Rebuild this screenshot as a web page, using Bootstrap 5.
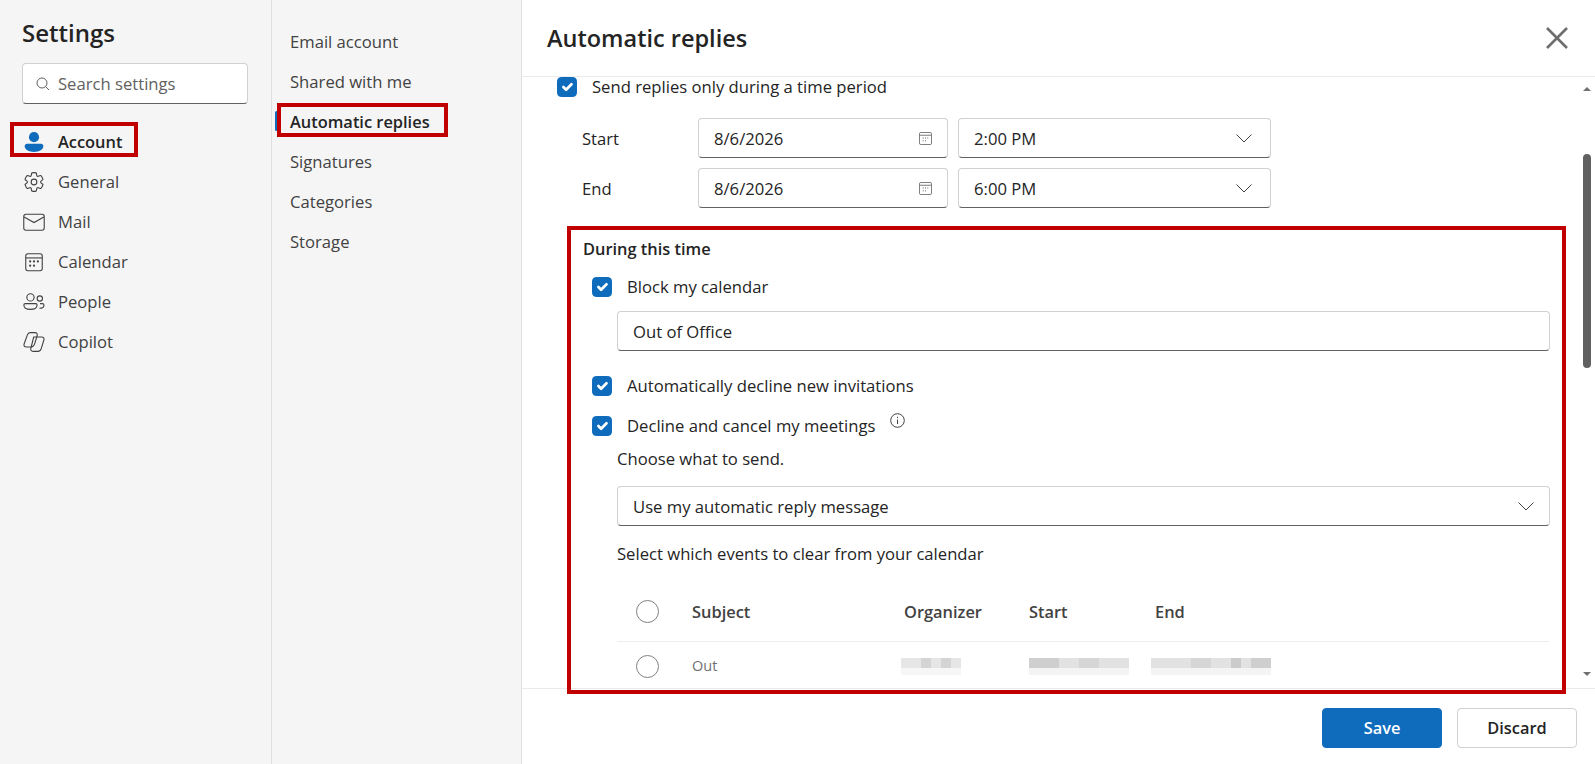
<!DOCTYPE html>
<html lang="en">
<head>
  <meta charset="UTF-8" />
  <meta name="viewport" content="width=device-width, initial-scale=1.0"/>
  <title>Settings - Automatic replies</title>
  <link href="https://cdn.jsdelivr.net/npm/bootstrap@5.3.0/dist/css/bootstrap.min.css" rel="stylesheet">
  <style>
    html, body { height: 764px; overflow: hidden; }
    body { font-family: "Open Sans", "Noto Sans", sans-serif; font-size: 16.65px; color: #242424; background: #fff; }
    .pane-nav { width: 272px; height: 764px; background: #f5f5f5; border-right: 1px solid #e0e0e0; padding: 0 23px 0 22px; flex: none; }
    .pane-sub { width: 250px; height: 764px; background: #f5f5f5; border-right: 1px solid #e0e0e0; padding-top: 22px; flex: none; }
    .pane-main { width: 1073px; height: 764px; flex: none; }
    .settings-title { font-size: 24px; font-weight: 600; line-height: 32px; margin: 17px 0 14px; }
    .search-box { height: 41px; background: #fff; border: 1px solid #d1d1d1; border-bottom-color: #616161; border-radius: 4px; padding-left: 12px; gap: 7px; color: #616161; }
    .search-box span { padding-top: 2px; }
    .nav-rows { margin: 18px 0 0 1px; }
    .nav-row { height: 40px; gap: 13px; color: #424242; position: relative; }
    .nav-row svg { width: 22px; height: 22px; flex: none; }
    .nav-row.is-on { font-weight: 600; font-size: 16.4px; color: #242424; }
    .nav-row.is-on::before { content: ""; position: absolute; left: -13px; top: 10px; width: 3px; height: 20px; background: #0f6cbd; border-radius: 2px; }
    .mark-nav { position: absolute; left: -13px; top: 0; width: 128px; height: 35px; border: 4px solid #c00000; }
    .sub-row { height: 40px; padding-left: 18px; color: #424242; position: relative; }
    .sub-row.is-on { font-weight: 600; font-size: 16.4px; color: #242424; }
    .sub-row.is-on::before { content: ""; position: absolute; left: 3px; top: 9px; width: 3px; height: 20px; background: #0f6cbd; border-radius: 2px; }
    .mark-sub { position: absolute; left: 5px; top: 1px; width: 171px; height: 34px; border: 4px solid #c00000; }
    .main-head { height: 77px; border-bottom: 1px solid #ebebeb; padding: 0 27px 0 25px; }
    .main-title { font-size: 23.5px; font-weight: 600; margin: 0; }
    .main-scroll { height: 611px; }
    .main-content { width: 1056px; flex: none; }
    .main-foot { height: 76px; border-top: 1px solid #ebebeb; padding: 19px 18px 0 0; gap: 15px; }
    .tick { width: 20px; height: 20px; margin: 0; flex: none; border-radius: 3px; }
    .form-check-input:checked.tick { background-color: #0f6cbd; border-color: #0f6cbd; }
    .dot { width: 23px; height: 23px; margin: 0 0 0 19px; border: 1.5px solid #808080; }
    .tick-row { gap: 15px; height: 20px; }
    .time-row { padding-left: 60px; margin-top: 10px; }
    .time-label { width: 116px; flex: none; padding-top: 2px; }
    .fld { height: 40px; background: #fff; border: 1px solid #d1d1d1; border-bottom-color: #616161; border-radius: 4px; padding: 0 15px; }
    .fld span { padding-top: 2px; }
    .fld-date { width: 250px; margin-right: 10px; }
    .fld-time { width: 313px; padding-right: 18px; }
    .mark-area { position: relative; z-index: 1; height: 468px; margin: 18px 12px 0 45px; border: 4px solid #c00000; padding: 9px 12px 0 12px; overflow: hidden; }
    .area-title { font-weight: 600; font-size: 16.4px; line-height: 20px; }
    .sub-indent { margin-left: 9px; }
    .fld-wide { margin-left: 34px; }
    .events { table-layout: fixed; width: 932px; margin: 21px 0 0 34px; color: #424242; }
    .events th, .events td { padding: 0; vertical-align: middle; background: transparent; color: inherit; }
    .events th { height: 56px; font-weight: 600; font-size: 16.4px; border-bottom: 1px solid #ededed; }
    .events td { height: 50px; border: 0; font-size: 14.5px; color: #707070; }
    .blur-bar { display: block; }
    .blur-org { margin-left: -3px; }
    .blur-end { margin-left: -4px; }
    .scroll-track { width: 17px; }
    .arrow-up, .arrow-down { width: 0; height: 0; border-left: 4px solid transparent; border-right: 4px solid transparent; margin: 0 auto; }
    .arrow-up { border-bottom: 4px solid #707070; margin-top: 10px; }
    .arrow-down { border-top: 4px solid #707070; margin-top: 304px; }
    .scroll-thumb { width: 8px; height: 214px; background: #616161; border-radius: 4px; margin: 63px auto 0; }
    .btn-save, .btn-discard { width: 120px; height: 40px; font-size: 16.4px; font-weight: 600; border-radius: 4px; }
    .btn-save { background: #0f6cbd; border-color: #0f6cbd; color: #fff; }
    .btn-discard { background: #fff; border-color: #d1d1d1; color: #242424; }
  </style>
</head>
<body>
<div class="d-flex">
  <div class="pane-nav">
    <div class="settings-title">Settings</div>
    <div class="search-box d-flex align-items-center">
      <svg width="16" height="16" viewBox="0 0 16 16" fill="none" stroke="#616161"><circle cx="7" cy="7" r="5"/><path d="M10.6 10.6 14 14"/></svg>
      <span>Search settings</span>
    </div>
    <div class="nav-rows">
      <div class="nav-row is-on d-flex align-items-center">
        <svg viewBox="0 0 20 20"><circle cx="10" cy="5.6" r="4.6" fill="#0f6cbd"/><path d="M3.6 11.6h12.8c1.2 0 2.1 1 2.1 2.1 0 3.4-3.8 5.3-8.5 5.3s-8.5-1.9-8.5-5.3c0-1.1.9-2.1 2.1-2.1Z" fill="#0f6cbd"/></svg>
        <span>Account</span><span class="mark-nav"></span>
      </div>
      <div class="nav-row d-flex align-items-center">
        <svg viewBox="0 0 20 20" fill="none" stroke="#424242"><path d="M1.91 7.38A8.5 8.5 0 0 1 3.7 4.3a.5.5 0 0 1 .54-.13l1.92.68a1 1 0 0 0 1.32-.76l.36-2a.5.5 0 0 1 .4-.4 8.53 8.53 0 0 1 3.55 0c.2.04.35.2.38.4l.37 2a1 1 0 0 0 1.32.76l1.92-.68a.5.5 0 0 1 .54.13 8.5 8.5 0 0 1 1.78 3.08c.06.2 0 .4-.15.54l-1.56 1.32a1 1 0 0 0 0 1.52l1.56 1.32a.5.5 0 0 1 .15.54 8.5 8.5 0 0 1-1.78 3.08.5.5 0 0 1-.54.13l-1.92-.68a1 1 0 0 0-1.32.76l-.37 2a.5.5 0 0 1-.38.4 8.53 8.53 0 0 1-3.56 0 .5.5 0 0 1-.39-.4l-.36-2a1 1 0 0 0-1.32-.76l-1.92.68a.5.5 0 0 1-.54-.13 8.5 8.5 0 0 1-1.78-3.08.5.5 0 0 1 .15-.54l1.56-1.32a1 1 0 0 0 0-1.52L2.06 7.92a.5.5 0 0 1-.15-.54Z"/><circle cx="10" cy="10" r="2.6"/></svg>
        <span>General</span>
      </div>
      <div class="nav-row d-flex align-items-center">
        <svg viewBox="0 0 20 20" fill="none" stroke="#424242"><rect x=".7" y="3" width="18.6" height="14.5" rx="2"/><path d="m1 5.5 9 5 9-5"/></svg>
        <span>Mail</span>
      </div>
      <div class="nav-row d-flex align-items-center">
        <svg viewBox="0 0 20 20" fill="none" stroke="#424242"><rect x="2.5" y="2.5" width="15" height="15.500" rx="2"/><path d="M2.500 6.300h15"/><g fill="#424242" stroke="none"><circle cx="6.500" cy="9.500" r="1"/><circle cx="10" cy="9.500" r="1"/><circle cx="13.500" cy="9.500" r="1"/><circle cx="6.500" cy="13.300" r="1"/><circle cx="10" cy="13.300" r="1"/></g></svg>
        <span>Calendar</span>
      </div>
      <div class="nav-row d-flex align-items-center">
        <svg viewBox="0 0 20 20" fill="none" stroke="#424242"><circle cx="6.8" cy="5.8" r="3.3"/><path d="M2 11.5h9.6c.7 0 1.2.5 1.2 1.2 0 2.6-2.6 4-6 4s-6-1.4-6-4c0-.7.5-1.2 1.2-1.2Z"/><circle cx="15.3" cy="6.8" r="2.4"/><path d="M15.5 11.5h2c.8 0 1.6.6 1.6 1.4 0 1.9-1.7 2.8-4.2 2.8"/></svg>
        <span>People</span>
      </div>
      <div class="nav-row d-flex align-items-center">
        <svg viewBox="0 0 20 20" fill="none" stroke="#424242"><path d="M6.5 1.500h4.500c1.500 0 2.300 1.200 1.900 2.600L10.500 12c-.5 1.500-1.600 2.500-3 2.500H3c-1.600 0-2.500-1.200-2-2.700L4 3.500C4.400 2.300 5.300 1.500 6.500 1.500Z"/><path d="M9.700 5.500H17c1.600 0 2.500 1.200 2 2.700l-2.500 8c-.5 1.500-1.600 2.300-3 2.300H9c-1.500 0-2.300-1.200-1.900-2.600L9.700 5.500Z"/></svg>
        <span>Copilot</span>
      </div>
    </div>
  </div>

  <div class="pane-sub">
    <div class="sub-row d-flex align-items-center">Email account</div>
    <div class="sub-row d-flex align-items-center">Shared with me</div>
    <div class="sub-row is-on d-flex align-items-center">Automatic replies<span class="mark-sub"></span></div>
    <div class="sub-row d-flex align-items-center">Signatures</div>
    <div class="sub-row d-flex align-items-center">Categories</div>
    <div class="sub-row d-flex align-items-center">Storage</div>
  </div>

  <div class="pane-main">
    <div class="main-head d-flex align-items-center justify-content-between">
      <h1 class="main-title">Automatic replies</h1>
      <svg width="22" height="22" viewBox="0 0 22 22" stroke="#6e6e6e" stroke-width="2.6"><path d="M1 1l20 20M21 1 1 21"/></svg>
    </div>

    <div class="main-scroll d-flex">
      <div class="main-content">
        <div class="tick-row d-flex align-items-center" style="padding-left:35px">
          <input class="form-check-input tick" type="checkbox" checked>
          <span>Send replies only during a time period</span>
        </div>
        <div class="time-row d-flex align-items-center" style="margin-top:21px">
          <span class="time-label">Start</span>
          <div class="fld fld-date d-flex align-items-center justify-content-between"><span>8/6/2026</span>
            <svg width="13" height="13" viewBox="0 0 14 14" fill="none" stroke="#707070"><rect x=".5" y=".5" width="13" height="13" rx="1.500"/><path d="M1 3.500h12"/><path d="M4 6.500h1M6.500 6.500h1M9 6.500h1M4 9.500h1M6.500 9.500h1" stroke="#555"/></svg></div>
          <div class="fld fld-time d-flex align-items-center justify-content-between"><span>2:00 PM</span>
            <svg width="16" height="9" viewBox="0 0 16 9" fill="none" stroke="#424242"><path d="m.5.5 7.500 7.500 7.500-7.500"/></svg></div>
        </div>
        <div class="time-row d-flex align-items-center">
          <span class="time-label">End</span>
          <div class="fld fld-date d-flex align-items-center justify-content-between"><span>8/6/2026</span>
            <svg width="13" height="13" viewBox="0 0 14 14" fill="none" stroke="#707070"><rect x=".5" y=".5" width="13" height="13" rx="1.500"/><path d="M1 3.500h12"/><path d="M4 6.500h1M6.500 6.500h1M9 6.500h1M4 9.500h1M6.500 9.500h1" stroke="#555"/></svg></div>
          <div class="fld fld-time d-flex align-items-center justify-content-between"><span>6:00 PM</span>
            <svg width="16" height="9" viewBox="0 0 16 9" fill="none" stroke="#424242"><path d="m.5.5 7.500 7.500 7.500-7.500"/></svg></div>
        </div>

        <div class="mark-area">
          <div class="area-title">During this time</div>
          <div class="tick-row sub-indent d-flex align-items-center" style="margin-top:18px">
            <input class="form-check-input tick" type="checkbox" checked>
            <span>Block my calendar</span>
          </div>
          <div class="fld fld-wide d-flex align-items-center" style="margin-top:14px"><span>Out of Office</span></div>
          <div class="tick-row sub-indent d-flex align-items-center" style="margin-top:25px">
            <input class="form-check-input tick" type="checkbox" checked>
            <span>Automatically decline new invitations</span>
          </div>
          <div class="tick-row sub-indent d-flex align-items-center" style="margin-top:20px">
            <input class="form-check-input tick" type="checkbox" checked>
            <span>Decline and cancel my meetings</span>
            <svg class="info-mark" width="15" height="15" viewBox="0 0 15 15" fill="none" stroke="#424242" style="margin-bottom:12px"><circle cx="7.500" cy="7.500" r="6.800"/><path d="M7.500 6.500v4.500M7.500 3.800v1.300"/></svg>
          </div>
          <div class="fld-wide" style="margin-top:13px;line-height:20px">Choose what to send.</div>
          <div class="fld fld-wide d-flex align-items-center justify-content-between" style="margin-top:17px"><span>Use my automatic reply message</span>
            <svg width="16" height="9" viewBox="0 0 16 9" fill="none" stroke="#424242"><path d="m.5.5 7.500 7.500 7.500-7.500"/></svg></div>
          <div class="fld-wide" style="margin-top:18px;line-height:20px">Select which events to clear from your calendar</div>
          <table class="table events">
            <colgroup><col style="width:75px"><col style="width:212px"><col style="width:125px"><col style="width:126px"><col></colgroup>
            <thead><tr>
              <th><input class="form-check-input dot rounded-circle" type="radio" name="allEvents"></th>
              <th>Subject</th><th>Organizer</th><th>Start</th><th>End</th>
            </tr></thead>
            <tbody><tr>
              <td><input class="form-check-input dot rounded-circle" type="radio" name="oneEvent"></td>
              <td>Out</td>
              <td><svg class="blur-bar blur-org" width="60" height="17"><rect width="60" height="10" fill="#e6e6e6"/><rect x="20" width="10" height="10" fill="#d4d4d4"/><rect x="40" width="10" height="10" fill="#d4d4d4"/><rect y="10" width="60" height="7" fill="#f6f6f6"/></svg></td>
              <td><svg class="blur-bar" width="100" height="17"><rect width="100" height="10" fill="#e2e2e2"/><rect width="30" height="10" fill="#cfcfcf"/><rect x="50" width="20" height="10" fill="#d6d6d6"/><rect y="10" width="100" height="7" fill="#f4f4f4"/></svg></td>
              <td><svg class="blur-bar blur-end" width="120" height="17"><rect width="120" height="10" fill="#e2e2e2"/><rect x="40" width="20" height="10" fill="#d6d6d6"/><rect x="80" width="10" height="10" fill="#cbcbcb"/><rect x="100" width="20" height="10" fill="#cfcfcf"/><rect y="10" width="120" height="7" fill="#f4f4f4"/></svg></td>
            </tr></tbody>
          </table>
        </div>
      </div>
      <div class="scroll-track">
        <div class="arrow-up"></div>
        <div class="scroll-thumb"></div>
        <div class="arrow-down"></div>
      </div>
    </div>

    <div class="main-foot d-flex justify-content-end align-items-start">
      <button type="button" class="btn btn-save">Save</button>
      <button type="button" class="btn btn-discard">Discard</button>
    </div>
  </div>
</div>
</body>
</html>
